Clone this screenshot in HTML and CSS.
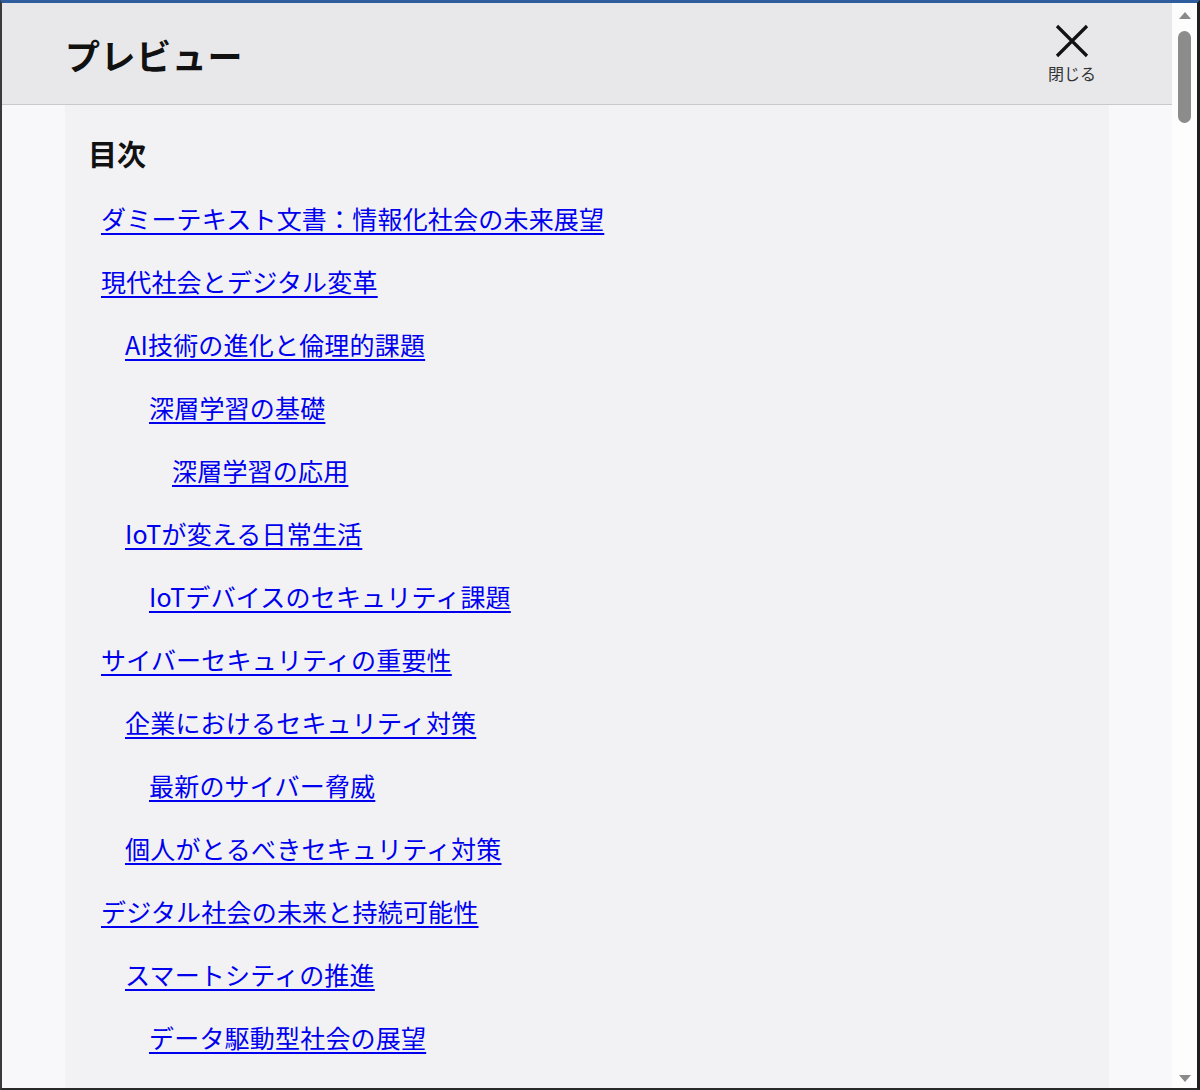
FILE: index.html
```html
<!DOCTYPE html>
<html lang="ja">
<head>
<meta charset="utf-8">
<title>プレビュー</title>
<link rel="stylesheet" href="styles.css">
</head>
<body>
<div class="frame">
  <div class="main">
    <header class="header">
      <h1 class="title">プレビュー</h1>
      <button class="close" type="button">
        <svg class="close-icon" width="34" height="34" viewBox="0 0 34 34" aria-hidden="true">
          <path d="M2 2 L32 32 M32 2 L2 32" stroke="#111" stroke-width="3.2" fill="none"/>
        </svg>
        <span class="close-label">閉じる</span>
      </button>
    </header>
    <div class="body">
      <section class="panel">
        <h2 class="toc-title">目次</h2>
        <ul class="toc">
          <li class="l1"><a href="#">ダミーテキスト文書：情報化社会の未来展望</a></li>
          <li class="l1"><a href="#">現代社会とデジタル変革</a></li>
          <li class="l2"><a href="#">AI技術の進化と倫理的課題</a></li>
          <li class="l3"><a href="#">深層学習の基礎</a></li>
          <li class="l4"><a href="#">深層学習の応用</a></li>
          <li class="l2"><a href="#">IoTが変える日常生活</a></li>
          <li class="l3"><a href="#">IoTデバイスのセキュリティ課題</a></li>
          <li class="l1"><a href="#">サイバーセキュリティの重要性</a></li>
          <li class="l2"><a href="#">企業におけるセキュリティ対策</a></li>
          <li class="l3"><a href="#">最新のサイバー脅威</a></li>
          <li class="l2"><a href="#">個人がとるべきセキュリティ対策</a></li>
          <li class="l1"><a href="#">デジタル社会の未来と持続可能性</a></li>
          <li class="l2"><a href="#">スマートシティの推進</a></li>
          <li class="l3"><a href="#">データ駆動型社会の展望</a></li>
        </ul>
      </section>
    </div>
  </div>
  <div class="scrollbar" aria-hidden="true">
    <span class="arrow-up"></span>
    <span class="thumb"></span>
    <span class="spacer"></span>
    <span class="arrow-down"></span>
  </div>
</div>
</body>
</html>
```

FILE: styles.css
```css
* { box-sizing: border-box; }
html, body {
  margin: 0;
  padding: 0;
  width: 1200px;
  height: 1090px;
  overflow: hidden;
  font-family: "Noto Sans CJK JP", "Noto Sans", sans-serif;
  background: #ffffff;
}
.frame {
  width: 1200px;
  height: 1090px;
  display: flex;
  border-top: 3px solid #2f5e9e;
  border-left: 2px solid #3a3a3a;
  border-right: 3px solid #1e1e1e;
  border-bottom: 2px solid #2a2a2a;
  overflow: hidden;
}
.main {
  flex: 1;
  display: flex;
  flex-direction: column;
  min-width: 0;
  overflow: hidden;
}
.header {
  flex: none;
  height: 102px;
  background: #e8e8ea;
  border-bottom: 1px solid #c9c9cc;
  display: flex;
  align-items: center;
  justify-content: space-between;
  padding: 0 76px 0 63px;
}
.title {
  margin: 0;
  font-size: 35px;
  font-weight: 700;
  color: #111;
  letter-spacing: 0.6px;
  padding-top: 2px;
}
.close {
  border: 0;
  background: transparent;
  padding: 0;
  display: flex;
  flex-direction: column;
  align-items: center;
  margin-top: -1px;
  font-family: inherit;
  cursor: pointer;
}
.close-icon { display: block; }
.close-label {
  font-size: 16px;
  color: #333;
  line-height: 18px;
  margin-top: 6px;
}
.body {
  flex: 1;
  background: #f8f8fa;
  padding-left: 63px;
  padding-right: 63px;
  overflow: hidden;
}
.panel {
  background: #f2f2f4;
  height: 100%;
  padding: 28px 25px 0 25px;
}
.toc-title {
  margin: 0 0 26px -2px;
  font-size: 29px;
  font-weight: 700;
  color: #111;
  line-height: 40px;
}
.toc {
  list-style: none;
  margin: 0;
  padding: 0 0 0 11px;
}
.toc li {
  font-size: 25px;
  line-height: 38px;
  margin-bottom: 25px;
  letter-spacing: 0.2px;
}
.toc a {
  color: #0000ee;
  text-decoration: underline;
  text-decoration-thickness: 2px;
  text-underline-offset: 4px;
}
.toc .l2 { padding-left: 24px; }
.toc .l3 { padding-left: 48px; }
.toc .l4 { padding-left: 71px; }
.scrollbar {
  flex: none;
  width: 25px;
  background: #fdfdfd;
  display: flex;
  flex-direction: column;
  align-items: center;
  padding: 9px 0 6px 0;
}
.arrow-up {
  width: 0;
  height: 0;
  border-left: 6px solid transparent;
  border-right: 6px solid transparent;
  border-bottom: 7px solid #8a8a8a;
}
.thumb {
  margin-top: 12px;
  width: 13px;
  height: 92px;
  border-radius: 7px;
  background: #8c8c8c;
}
.spacer { flex: 1; }
.arrow-down {
  width: 0;
  height: 0;
  border-left: 6px solid transparent;
  border-right: 6px solid transparent;
  border-top: 7px solid #8a8a8a;
}
```
